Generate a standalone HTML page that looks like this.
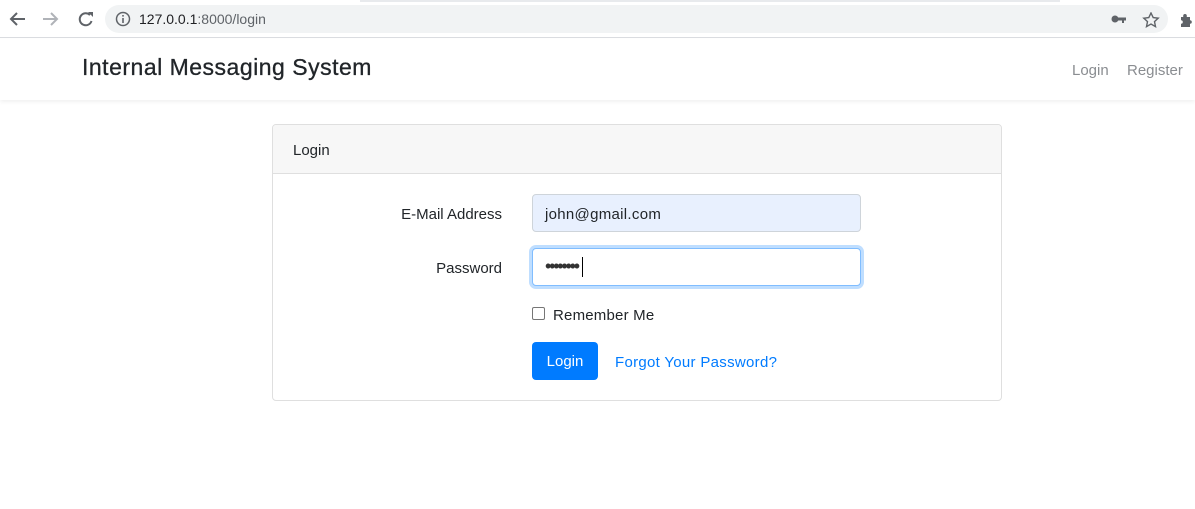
<!DOCTYPE html>
<html><head><style>
*{box-sizing:border-box;margin:0;padding:0}
body{width:1195px;height:509px;overflow:hidden;background:#fff;font-family:"Liberation Sans",sans-serif;color:#212529;position:relative}
.abs{position:absolute}
</style></head><body>
<div class="abs" style="left:0;top:0;width:1195px;height:38px;background:#fff;border-bottom:1px solid #dadce0"></div>
<div class="abs" style="left:360px;top:0;width:700px;height:2px;background:#e8eaed"></div>
<svg class="abs" style="left:8px;top:9px" width="90" height="20" viewBox="0 0 90 20">
<path d="M17 10H4M9 4L3 10l6 6" stroke="#5f6368" stroke-width="2" fill="none"/>
<path d="M35 10h13M43 4l6 6-6 6" stroke="#b0b3b8" stroke-width="2" fill="none"/>
<path d="M82 6a6 6 0 1 0 1.5 6" stroke="#5f6368" stroke-width="2" fill="none"/><path d="M80 3h5v5z" fill="#5f6368"/>
</svg>
<div class="abs" style="left:105px;top:5px;width:1063px;height:28px;border-radius:14px;background:#f1f3f4"></div>
<svg class="abs" style="left:115px;top:11px" width="16" height="16"><circle cx="8" cy="8" r="6.5" stroke="#5f6368" stroke-width="1.5" fill="none"/><rect x="7.2" y="7" width="1.6" height="5" fill="#5f6368"/><rect x="7.2" y="4" width="1.6" height="1.6" fill="#5f6368"/></svg>
<div class="abs" style="left:139px;top:11px;font-size:14px;color:#202124">127.0.0.1<span style="color:#5f6368">:8000/login</span></div>
<svg class="abs" style="left:1110px;top:12px" width="85" height="16"><circle cx="5" cy="7" r="3.5" fill="#5f6368"/><rect x="7" y="5.5" width="9" height="3" fill="#5f6368"/><rect x="12" y="7" width="2" height="4" fill="#5f6368"/>
<path d="M41 1l2.2 4.6 5 .6-3.7 3.4 1 5L41 12l-4.5 2.6 1-5-3.7-3.4 5-.6z" fill="none" stroke="#5f6368" stroke-width="1.4"/>
<path d="M75 2a1.8 1.8 0 0 1 1.8 1.8V5h3.2v3.2a1.8 1.8 0 1 1 0 3.6V15h-9v-3.2a1.8 1.8 0 1 0 0-3.6V5h2.2V3.8A1.8 1.8 0 0 1 75 2z" fill="#5f6368"/></svg>
<div class="abs" style="left:0;top:39px;width:1195px;height:61px;background:#fff;box-shadow:0 2px 4px rgba(0,0,0,.06)"></div>
<div class="abs" style="left:82px;top:54px;font-size:23px;letter-spacing:0.5px;color:#212529;-webkit-text-stroke:0.3px #212529">Internal Messaging System</div>
<div class="abs" style="left:1072px;top:61px;font-size:15px;color:#8a8d91;top:62px">Login</div>
<div class="abs" style="left:1127px;top:62px;font-size:15px;color:#8a8d91">Register</div>
<div class="abs" style="left:272px;top:124px;width:730px;height:277px;border:1px solid #dfdfdf;border-radius:4px;overflow:hidden">
<div style="height:49px;background:#f7f7f7;border-bottom:1px solid #dfdfdf;padding:17px 0 0 20px;font-size:15px">Login</div>
</div>
<div class="abs" style="left:300px;top:206px;width:202px;text-align:right;font-size:15px">E-Mail Address</div>
<div class="abs" style="left:300px;top:260px;width:202px;text-align:right;font-size:15px">Password</div>
<div class="abs" style="left:532px;top:194px;width:329px;height:38px;background:#e8f0fe;border:1px solid #ced4da;border-radius:4px;padding:11px 0 0 12px;font-size:15px;letter-spacing:0.3px">john@gmail.com</div>
<div class="abs" style="left:532px;top:248px;width:329px;height:38px;background:#fff;border:1px solid #80bdff;box-shadow:0 0 0 3px rgba(0,123,255,.25);border-radius:4px;padding:7px 0 0 12px;font-size:18px;letter-spacing:-2.2px;color:#333">••••••••<span style="display:inline-block;width:1px;height:20px;background:#000;vertical-align:middle;margin-left:4px"></span></div>
<div class="abs" style="left:532px;top:307px;width:13px;height:13px;border:1px solid #767676;border-radius:2px"></div>
<div class="abs" style="left:553px;top:307px;font-size:15px;letter-spacing:0.2px">Remember Me</div>
<div class="abs" style="left:532px;top:342px;width:66px;height:38px;background:#007bff;border-radius:4px;color:#fff;font-size:15px;text-align:center;padding-top:11px">Login</div>
<div class="abs" style="left:615px;top:354px;font-size:15px;letter-spacing:0.3px;color:#007bff">Forgot Your Password?</div>
</body></html>
